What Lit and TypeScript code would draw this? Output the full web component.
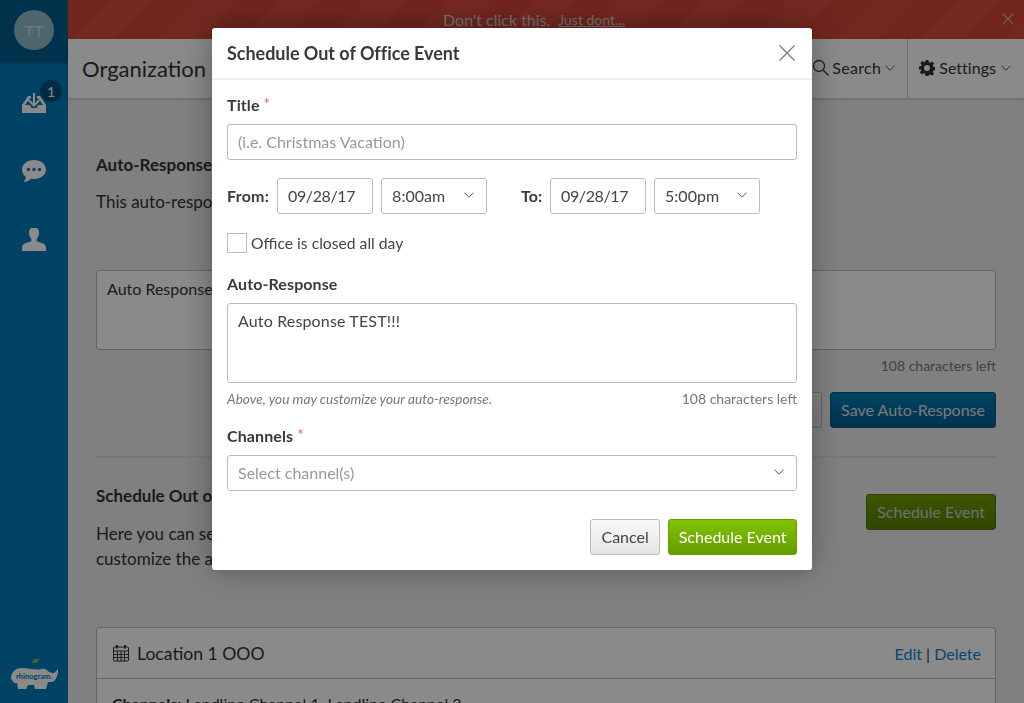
import { LitElement, html, css, svg } from 'lit';
import { customElement } from 'lit/decorators.js';

const chevron = svg`<svg class="chev" width="10" height="6" viewBox="0 0 10 6"><path d="M.5.7 5 5.2 9.5.7" fill="none" stroke="currentColor" stroke-width="1"/></svg>`;

@customElement('app-root')
export default class AppRoot extends LitElement {
  static styles = css`
    :host {
      display: block;
      height: 703px;
      overflow: hidden;
      font-family: Lato, "Open Sans", sans-serif;
      font-size: 16px;
      color: #333;
      background: #ededed;
    }
    * { box-sizing: border-box; }
    .page { display: flex; height: 703px; }

    .sidebar {
      width: 68px;
      flex: none;
      display: flex;
      flex-direction: column;
      align-items: center;
      background: #007ab8;
    }
    .profile {
      width: 100%;
      height: 62px;
      flex: none;
      display: flex;
      justify-content: center;
      padding-top: 10px;
      background: #005d8c;
      box-shadow: 0 1px 3px rgba(0, 0, 0, .3);
    }
    .avatar {
      width: 40px;
      height: 40px;
      border-radius: 50%;
      background: #8fbcc9;
      color: #cfe0e4;
      display: flex;
      align-items: center;
      justify-content: center;
      font-size: 16px;
    }
    .nav { display: flex; flex-direction: column; align-items: center; gap: 44px; padding-top: 30px; }
    .nav-item { position: relative; width: 24px; height: 24px; color: #fff; display: block; }
    .nav-item svg { display: block; }
    .badge {
      position: absolute;
      left: 18px;
      top: -12px;
      width: 22px;
      height: 22px;
      border-radius: 50%;
      background: #00527c;
      color: #fff;
      font-size: 14px;
      display: flex;
      align-items: center;
      justify-content: center;
    }
    .logo { margin-top: auto; margin-bottom: 13px; position: relative; width: 48px; height: 32px; color: #fff; }
    .logo svg { display: block; }
    .logo span {
      position: absolute;
      left: 6px;
      top: 15px;
      font-size: 7.5px;
      line-height: 8px;
      font-weight: 700;
      color: #007ab8;
      white-space: nowrap;
    }

    .main { flex: 1; min-width: 0; display: flex; flex-direction: column; }
    .banner {
      height: 39px;
      flex: none;
      position: relative;
      display: flex;
      align-items: center;
      justify-content: center;
      gap: 8px;
      padding-right: 24px;
      color: #d4d4d4;
      font-size: 16px;
      background: repeating-linear-gradient(135deg, #cf4636 0 30px, #d44c3c 30px 60px);
    }
    .banner a { font-size: 14px; text-decoration: underline; }
    .banner .close { position: absolute; right: 10px; top: 13px; display: block; }
    .topbar {
      height: 59px;
      flex: none;
      background: #fff;
      display: flex;
      align-items: stretch;
      box-shadow: 0 1px 3px rgba(0, 0, 0, .2);
    }
    .topbar h1 { margin: 0 auto 0 14px; font-size: 22px; font-weight: 400; align-self: center; }
    .tool { display: flex; align-items: center; gap: 3px; padding: 0 12px 2px 0; font-size: 16px; letter-spacing: .3px; }
    .tool svg { display: block; }
    .tool .chev { margin-left: 1px; }
    .tool.divided { border-left: 1px solid #ccc; padding: 0 13px 2px 11px; gap: 4px; letter-spacing: .03px; }
    .tool.divided .chev { margin-left: 1px; }

    .content { padding: 56px 28px 0; display: flex; flex-direction: column; }
    .content h2 { margin: 0; font-size: 17px; line-height: 22px; font-weight: 700; }
    .content p { margin: 13px 0 0; font-size: 17px; line-height: 25px; }
    .area {
      height: 80px;
      margin-top: 56px;
      border: 1px solid #bbb;
      border-radius: 3px;
      background: #fff;
      padding: 6px 10px;
      font-size: 16px;
      line-height: 24px;
    }
    .left { margin-top: 6px; text-align: right; font-size: 14px; line-height: 20px; color: #777; }
    .actions { display: flex; justify-content: flex-end; gap: 8px; margin-top: 16px; }
    .btn {
      height: 36px;
      padding: 0 10px 2px;
      border-radius: 3px;
      font-size: 16px;
      display: flex;
      align-items: center;
      white-space: nowrap;
    }
    .btn.plain { border: 1px solid #bbb; background: linear-gradient(#fafafa, #e4e4e4); color: #444; }
    .btn.blue { border: 1px solid #005d8c; background: linear-gradient(#007cb4, #005f90); color: #e0e0e0; }
    .btn.green { border: 1px solid #6a9b00; background: linear-gradient(#82c300, #669c00); color: #fff; }
    .btn.green.behind { border-color: #557a00; background: linear-gradient(#709f00, #5a8000); color: #cfcfcf; }
    .rule { height: 2px; background: #ddd; margin-top: 28px; }
    .schedule { display: flex; justify-content: space-between; align-items: flex-start; margin-top: 27px; }
    .schedule .copy p { margin-top: 14px; }
    .schedule .btn { margin-top: 9px; }
    .card { margin-top: 56px; border: 1px solid #bbb; border-radius: 3px; background: #fff; }
    .card-head {
      height: 51px;
      display: flex;
      align-items: center;
      gap: 7px;
      padding: 0 14px 0 15px;
      border-bottom: 1px solid #bbb;
      font-size: 17.6px;
    }
    .card-head svg { display: block; }
    .card-head .links { margin-left: auto; font-size: 16px; color: #333; }
    .card-head .links a { color: #0089c9; }
    .card-body { padding: 15px; font-size: 16px; }

    .overlay {
      position: fixed;
      inset: 0;
      background: rgba(0, 0, 0, .46);
      display: flex;
      justify-content: center;
      align-items: flex-start;
      padding-top: 28px;
    }
    .modal {
      width: 600px;
      height: 542px;
      background: #fff;
      border-radius: 3px;
      box-shadow: 0 0 32px rgba(0, 0, 0, .35);
      display: flex;
      flex-direction: column;
    }
    .modal-head {
      height: 52px;
      flex: none;
      display: flex;
      align-items: center;
      justify-content: space-between;
      padding: 0 17px 0 15px;
      border-bottom: 2px solid #eee;
    }
    .modal-head h3 { margin: 0; font-size: 18px; font-weight: 700; color: #3a3a3a; letter-spacing: -.03px; }
    .modal-head svg { display: block; }
    .modal-body { padding: 13px 15px 0; display: flex; flex-direction: column; }
    label, .label { font-size: 16px; line-height: 24px; font-weight: 700; color: #3a3a3a; display: block; letter-spacing: .1px; }
    .req { color: #f0574c; font-size: 15px; line-height: 0; font-weight: 400; vertical-align: 2px; }
    .field {
      height: 36px;
      border: 1px solid #bbb;
      border-radius: 3px;
      display: flex;
      align-items: center;
      justify-content: space-between;
      padding: 0 10px 2px;
      font-size: 16px;
      color: #444;
      background: #fff;
    }
    .placeholder { color: #999; }
    .chev { display: block; color: #555; flex: none; }
    .title-field { margin-top: 7px; }
    .times { display: flex; align-items: center; margin-top: 18px; }
    .times .label { letter-spacing: .25px; }
    .times .date { width: 96px; margin-left: 8px; letter-spacing: -.4px; }
    .times .time { width: 106px; margin-left: 8px; padding-right: 12px; }
    .times .label.to { margin-left: 34px; letter-spacing: 0; }
    .check { display: flex; align-items: center; gap: 4px; margin-top: 19px; font-size: 15.7px; color: #444; line-height: 20px; }
    .box { width: 20px; height: 20px; border: 1px solid #bbb; background: #fff; flex: none; }
    .resp-label { margin-top: 19px; }
    .text {
      height: 80px;
      margin-top: 7px;
      border: 1px solid #bbb;
      border-radius: 3px;
      padding: 7px 10px;
      font-size: 16px;
      line-height: 20px;
      letter-spacing: .15px;
      color: #444;
    }
    .help { display: flex; justify-content: space-between; margin-top: 6px; line-height: 20px; font-size: 13.7px; color: #777; }
    .help i { font-style: italic; }
    .help span { font-size: 14px; }
    .chan-label { margin-top: 15px; }
    .chan { margin-top: 7px; padding-right: 12px; }
    .foot { display: flex; justify-content: flex-end; gap: 8px; margin-top: 28px; }
    .foot .plain { padding: 0 10.5px 2px; }
    .foot .green { padding: 0 9.5px 2px; }
  `;

  render() {
    return html`
      <div class="page">
        <aside class="sidebar">
          <div class="profile"><div class="avatar">TT</div></div>
          <div class="nav">
            <div class="nav-item">
              <svg width="24" height="24" viewBox="0 0 24 24" fill="currentColor">
                <path d="M0 13 6 4h3v2.500H7.500L3 13h5l1.500 3h5l1.500-3h5L16.500 6.500H15V4h3l6 9v8H0Z"/>
                <path d="M12 1v12.500M6.500 8 12 13.500 17.500 8" fill="none" stroke="currentColor" stroke-width="2"/>
              </svg>
              <span class="badge">1</span>
            </div>
            <div class="nav-item">
              <svg width="24" height="24" viewBox="0 0 24 24" fill="currentColor" fill-rule="evenodd">
                <path d="M12 0c6.600 0 12 4 12 9.500S18.600 19 12 19c-1 0-2-.1-2.900-.3C7.500 20.500 4.500 22 1.500 22c1.300-1.400 2.200-3 2.300-5C1.500 15.200 0 12.500 0 9.500 0 4 5.400 0 12 0ZM6.500 7.800a1.700 1.700 0 1 0 0 3.400 1.700 1.700 0 0 0 0-3.400Zm5.500 0a1.700 1.700 0 1 0 0 3.400 1.700 1.700 0 0 0 0-3.400Zm5.500 0a1.700 1.700 0 1 0 0 3.400 1.700 1.700 0 0 0 0-3.400Z"/>
              </svg>
            </div>
            <div class="nav-item">
              <svg width="24" height="24" viewBox="0 0 24 24" fill="currentColor">
                <path d="M12-1c3.300 0 5 2.500 5 5.800 0 2.600-1 4.700-2.300 6.200v2.300c3.500 1.200 9.300 2.300 9.300 6.200V23H0v-3.500c0-3.900 5.800-5 9.300-6.200V11C8 9.500 7 7.400 7 4.800 7 1.500 8.700-1 12-1Z"/>
              </svg>
            </div>
          </div>
          <div class="logo">
            <svg width="48" height="32" viewBox="0 0 48 32" fill="currentColor">
              <path d="M1 21C1 14 5 10 12 10c6 0 10 1.500 15 1.500 3 0 5-1.500 8-.5l2 1 2 2c3 1 4 1 5 1 2-1 3-3 4-4 .5 4-1 8-3 11-1 2-4 2-7 2l-2 7H25l-1-4h-6l-2 4H8l-1-6c-2 1-4-1-5-3Z"/>
              <path d="M22 4c1-2 2-3 4-3 1 0 2 0 3-1 0 2-1 4-3 5h-3Z" fill="#8bb53a"/>
            </svg>
            <span>rhinogram.</span>
          </div>
        </aside>
        <div class="main">
          <div class="banner">
            <span>Don't click this.</span><a>Just dont...</a>
            <svg class="close" width="12" height="12" viewBox="0 0 12 12"><path d="M.5.500l11 11M11.500.500l-11 11" stroke="#d4d4d4" stroke-opacity=".7" stroke-width="1.200"/></svg>
          </div>
          <header class="topbar">
            <h1>Organization Preferences</h1>
            <div class="tool">
              <svg width="17" height="17" viewBox="0 0 17 17" fill="none" stroke="currentColor" stroke-width="1.300"><circle cx="7" cy="7" r="5.500"/><path d="m11 11 5.500 5.500"/></svg>
              <span>Search</span>${chevron}
            </div>
            <div class="tool divided">
              <svg width="16" height="16" viewBox="0 0 16 16" fill="currentColor" fill-rule="evenodd"><path d="M6.500 0h3l.4 2.200 1.300.6L13.100 1.500l2 2-1.300 1.900.6 1.300 2.200.4v3l-2.200.4-.6 1.300 1.300 1.900-2 2-1.900-1.300-1.300.6L9.500 16h-3l-.4-2.200-1.300-.6-1.900 1.300-2-2 1.300-1.900-.6-1.300L-.1 9.500v-3l2.200-.4.6-1.300-1.300-1.900 2-2 1.900 1.300 1.300-.6ZM8 5a3 3 0 1 0 0 6 3 3 0 0 0 0-6Z"/></svg>
              <span>Settings</span>${chevron}
            </div>
          </header>
          <div class="content">
            <h2>Auto-Response</h2>
            <p>This auto-response will be sent to anyone who messages you outside of the set business hours.</p>
            <div class="area">Auto Response TEST!!!</div>
            <div class="left">108 characters left</div>
            <div class="actions">
              <div class="btn plain">Reset Default</div>
              <div class="btn blue">Save Auto-Response</div>
            </div>
            <div class="rule"></div>
            <div class="schedule">
              <div class="copy">
                <h2>Schedule Out of Office Event</h2>
                <p>Here you can set upcoming Out of Office events and<br />customize the auto-response for each one.</p>
              </div>
              <div class="btn green behind">Schedule Event</div>
            </div>
            <div class="card">
              <div class="card-head">
                <svg width="18" height="18" viewBox="0 0 18 18" fill="none" stroke="currentColor"><rect x="1.500" y="3" width="15" height="14" rx="1"/><path d="M1.500 7h15M1.500 10.500h15M1.500 13.500h15M5.500 7v10M9 7v10M12.500 7v10"/><path d="M5 1v3.500M13 1v3.500" stroke-width="2"/></svg>
                <span>Location 1 OOO</span>
                <span class="links"><a>Edit</a> | <a>Delete</a></span>
              </div>
              <div class="card-body"><b>Channels:</b> Landline Channel 1, Landline Channel 2</div>
            </div>
          </div>
        </div>
      </div>
      <div class="overlay">
        <div class="modal">
          <div class="modal-head">
            <h3>Schedule Out of Office Event</h3>
            <svg width="16" height="16" viewBox="0 0 16 16"><path d="M.5.5l15 15M15.500.5l-15 15" stroke="#777" stroke-width="1.200"/></svg>
          </div>
          <div class="modal-body">
            <label>Title <span class="req">*</span></label>
            <div class="field title-field"><span class="placeholder">(i.e. Christmas Vacation)</span></div>
            <div class="times">
              <span class="label">From:</span>
              <div class="field date">09/28/17</div>
              <div class="field time">8:00am ${chevron}</div>
              <span class="label to">To:</span>
              <div class="field date">09/28/17</div>
              <div class="field time">5:00pm ${chevron}</div>
            </div>
            <div class="check"><div class="box"></div><span>Office is closed all day</span></div>
            <label class="resp-label">Auto-Response</label>
            <div class="text">Auto Response TEST!!!</div>
            <div class="help"><i>Above, you may customize your auto-response.</i><span>108 characters left</span></div>
            <label class="chan-label">Channels <span class="req">*</span></label>
            <div class="field chan"><span class="placeholder">Select channel(s)</span>${chevron}</div>
            <div class="foot">
              <div class="btn plain">Cancel</div>
              <div class="btn green">Schedule Event</div>
            </div>
          </div>
        </div>
      </div>
    `;
  }
}
